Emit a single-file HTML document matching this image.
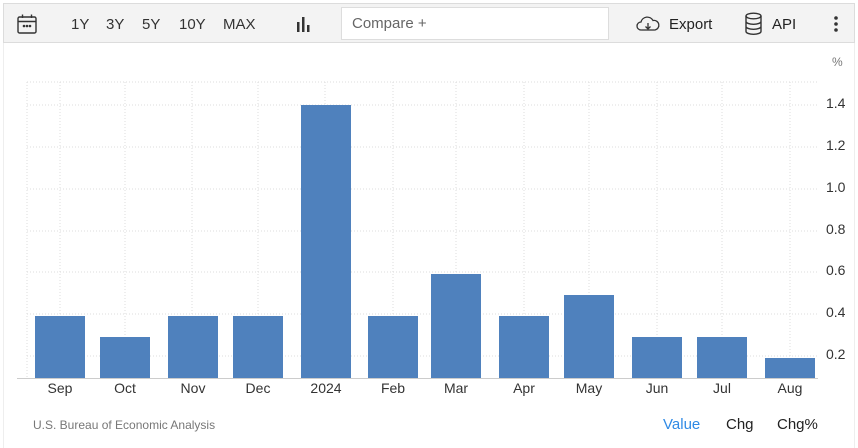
<!DOCTYPE html>
<html><head><style>
body{margin:0;width:858px;height:448px;background:#fff;font-family:"Liberation Sans",sans-serif;overflow:hidden;position:relative}
.bar{position:absolute;left:3px;top:3px;width:852px;height:40px;background:#f3f3f3;border:1px solid #dcdcdc;box-sizing:border-box}
.t{position:absolute;font-size:15px;color:#333;top:12px}
.cmp{position:absolute;left:341px;top:7px;width:268px;height:33px;background:#fff;border:1px solid #ddd;box-sizing:border-box;font-size:15px;color:#666;padding:7px 10px}
.frame{position:absolute;left:3px;top:43px;width:852px;height:405px;border-left:1px solid #eee;border-right:1px solid #eee;box-sizing:border-box}
</style></head><body>
<div class="frame"></div>
<div class="bar">
<svg style="position:absolute;left:12px;top:9px" width="22" height="22" viewBox="0 0 22 22" fill="none" stroke="#333" stroke-width="1.4"><rect x="2" y="4" width="18" height="16" rx="1.5"/><line x1="2" y1="8.5" x2="20" y2="8.5"/><line x1="6.5" y1="1.5" x2="6.5" y2="5"/><line x1="15.5" y1="1.5" x2="15.5" y2="5"/><circle cx="8" cy="13" r=".6" fill="#333"/><circle cx="11" cy="13" r=".6" fill="#333"/><circle cx="14" cy="13" r=".6" fill="#333"/></svg>
<span class="t" style="left:67px">1Y</span><span class="t" style="left:102px">3Y</span><span class="t" style="left:138px">5Y</span><span class="t" style="left:175px">10Y</span><span class="t" style="left:219px">MAX</span>
<svg style="position:absolute;left:292px;top:11px" width="16" height="18"><rect x="1" y="7" width="2.5" height="10" fill="#333"/><rect x="6" y="2" width="2.5" height="15" fill="#333"/><rect x="11" y="10" width="2.5" height="7" fill="#333"/></svg>
<span class="t" style="left:665px;color:#222">Export</span>
<svg style="position:absolute;left:632px;top:10px" width="24" height="20" viewBox="0 0 24 20" fill="none" stroke="#333" stroke-width="1.3"><path d="M6 16H5a4 4 0 0 1 0-8 6.5 6.5 0 0 1 12-1.5A4.5 4.5 0 0 1 19 16h-1"/><path d="M12 9v6M9.5 12.5 12 15l2.5-2.5"/><path d="M6 16h12"/></svg>
<svg style="position:absolute;left:740px;top:8px" width="19" height="24" viewBox="0 0 19 24" fill="none" stroke="#333" stroke-width="1.4"><ellipse cx="9.5" cy="4" rx="7.5" ry="2.8"/><path d="M2 4v15.5c0 1.5 3.3 2.8 7.5 2.8s7.5-1.3 7.5-2.8V4M2 9.5c0 1.5 3.3 2.8 7.5 2.8s7.5-1.3 7.5-2.8M2 14.5c0 1.5 3.3 2.8 7.5 2.8s7.5-1.3 7.5-2.8"/></svg>
<span class="t" style="left:768px;color:#222">API</span>
<svg style="position:absolute;left:829px;top:11px" width="6" height="18"><circle cx="3" cy="3" r="1.8" fill="#333"/><circle cx="3" cy="9" r="1.8" fill="#333"/><circle cx="3" cy="15" r="1.8" fill="#333"/></svg>
</div>
<div class="cmp">Compare +</div>
<svg style="position:absolute;left:0;top:0" width="858" height="448" font-family="Liberation Sans, sans-serif">
<g stroke="#ddd" stroke-dasharray="1,2" stroke-width="1">
<line x1="27" y1="82" x2="818" y2="82"/><line x1="27" y1="105" x2="818" y2="105"/><line x1="27" y1="147" x2="818" y2="147"/><line x1="27" y1="189" x2="818" y2="189"/><line x1="27" y1="231" x2="818" y2="231"/><line x1="27" y1="272" x2="818" y2="272"/><line x1="27" y1="314" x2="818" y2="314"/><line x1="27" y1="356" x2="818" y2="356"/>
<line x1="27" y1="82" x2="27" y2="378"/><line x1="60" y1="82" x2="60" y2="378"/><line x1="125" y1="82" x2="125" y2="378"/><line x1="192" y1="82" x2="192" y2="378"/><line x1="258" y1="82" x2="258" y2="378"/><line x1="325" y1="82" x2="325" y2="378"/><line x1="393" y1="82" x2="393" y2="378"/><line x1="456" y1="82" x2="456" y2="378"/><line x1="524" y1="82" x2="524" y2="378"/><line x1="589" y1="82" x2="589" y2="378"/><line x1="657" y1="82" x2="657" y2="378"/><line x1="722" y1="82" x2="722" y2="378"/><line x1="790" y1="82" x2="790" y2="378"/>
</g>
<line x1="17" y1="378.5" x2="818" y2="378.5" stroke="#ccc"/>
<g fill="#4f81bd">
<rect x="35" y="316" width="50" height="62"/><rect x="100" y="337" width="50" height="41"/><rect x="168" y="316" width="50" height="62"/><rect x="233" y="316" width="50" height="62"/><rect x="301" y="105" width="50" height="273"/><rect x="368" y="316" width="50" height="62"/><rect x="431" y="274" width="50" height="104"/><rect x="499" y="316" width="50" height="62"/><rect x="564" y="295" width="50" height="83"/><rect x="632" y="337" width="50" height="41"/><rect x="697" y="337" width="50" height="41"/><rect x="765" y="358" width="50" height="20"/>
</g>
<g font-size="14" fill="#333" text-anchor="middle">
<text x="60" y="393">Sep</text><text x="125" y="393">Oct</text><text x="193" y="393">Nov</text><text x="258" y="393">Dec</text><text x="326" y="393">2024</text><text x="393" y="393">Feb</text><text x="456" y="393">Mar</text><text x="524" y="393">Apr</text><text x="589" y="393">May</text><text x="657" y="393">Jun</text><text x="722" y="393">Jul</text><text x="790" y="393">Aug</text>
</g>
<g font-size="14" fill="#333">
<text x="826" y="108">1.4</text><text x="826" y="150">1.2</text><text x="826" y="192">1.0</text><text x="826" y="234">0.8</text><text x="826" y="275">0.6</text><text x="826" y="317">0.4</text><text x="826" y="359">0.2</text>
</g>
<text x="832" y="66" font-size="12" fill="#777">%</text>
<text x="33" y="429" font-size="12" fill="#777">U.S. Bureau of Economic Analysis</text>
<text x="663" y="429" font-size="15" fill="#2f8ae5">Value</text>
<text x="726" y="429" font-size="15" fill="#222">Chg</text>
<text x="777" y="429" font-size="15" fill="#222">Chg%</text>
</svg>
</body></html>
